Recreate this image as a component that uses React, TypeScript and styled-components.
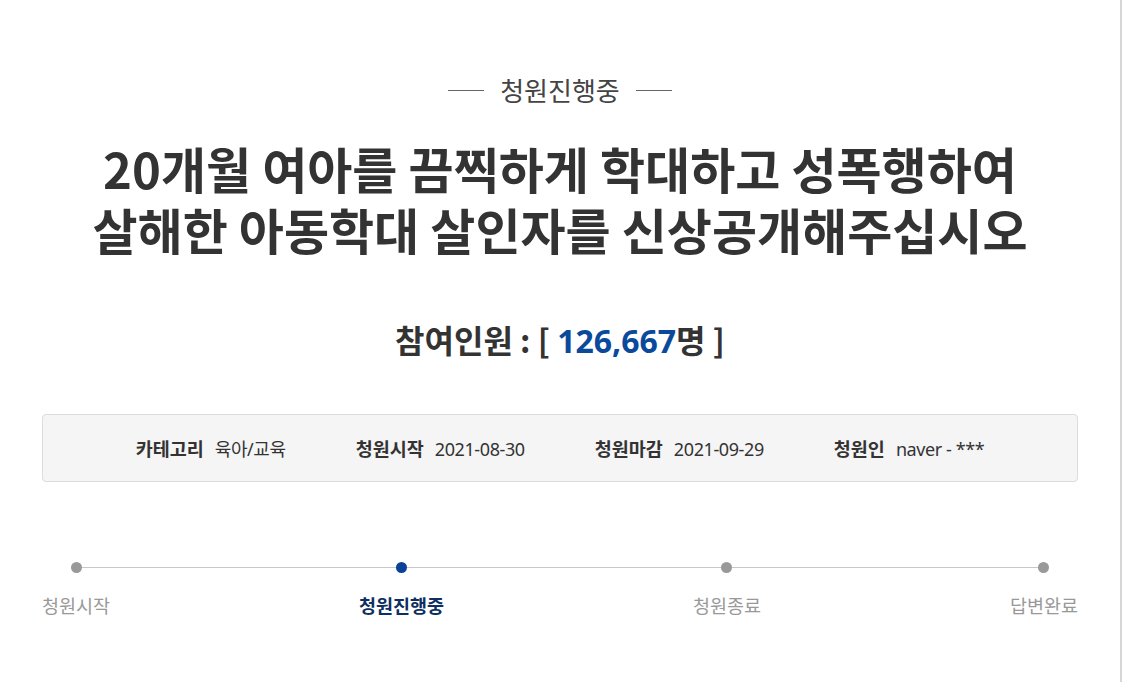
import styled, { createGlobalStyle } from "styled-components";

const GlobalStyle = createGlobalStyle`
  html, body {
    margin: 0;
    padding: 0;
    background: #ffffff;
  }
  body {
    font-family: "Noto Sans", "Noto Sans CJK KR", sans-serif;
    color: #333333;
  }
`;

const steps = [
  { label: "청원시작", active: false },
  { label: "청원진행중", active: true },
  { label: "청원종료", active: false },
  { label: "답변완료", active: false },
];

const info = [
  { label: "카테고리", value: "육아/교육" },
  { label: "청원시작", value: "2021-08-30" },
  { label: "청원마감", value: "2021-09-29" },
  { label: "청원인", value: "naver - ***" },
];

export default function App() {
  return (
    <>
      <GlobalStyle />
      <Page>
        <Content>
          <Status>청원진행중</Status>
          <Title>
            20개월 여아를 끔찍하게 학대하고 성폭행하여
            <br />
            살해한 아동학대 살인자를 신상공개해주십시오
          </Title>
          <Count>
            참여인원 : [ <span>126,667</span>명 ]
          </Count>
          <InfoBox>
            {info.map((item) => (
              <InfoItem key={item.label}>
                <b>{item.label}</b>
                {item.value}
              </InfoItem>
            ))}
          </InfoBox>
          <Progress>
            {steps.map((step) => (
              <Step key={step.label}>
                <Dot active={step.active} />
                <StepLabel active={step.active}>{step.label}</StepLabel>
              </Step>
            ))}
          </Progress>
        </Content>
      </Page>
    </>
  );
}

// Style
const Page = styled.div`
  width: 1122px;
  min-height: 682px;
  border-right: 2px solid #d6d6d6;
  box-sizing: border-box;
  background: #ffffff;
`;

const Content = styled.div`
  width: 1036px;
  margin: 0 auto;
  padding-top: 73px;
  display: flex;
  flex-direction: column;
  align-items: stretch;
`;

const Status = styled.div`
  display: flex;
  align-items: center;
  justify-content: center;
  gap: 16px;
  font-family: "Noto Sans CJK KR", sans-serif;
  font-size: 26px;
  line-height: 34px;
  color: #444444;

  &::before,
  &::after {
    content: "";
    width: 36px;
    height: 1px;
    background: #666666;
  }
`;

const Title = styled.h1`
  margin: 30px 0 0;
  text-align: center;
  font-family: "Noto Sans CJK KR", sans-serif;
  font-size: 49px;
  font-weight: 700;
  line-height: 61px;
  color: #333333;
`;

const Count = styled.div`
  margin-top: 60px;
  text-align: center;
  font-family: "Noto Sans CJK KR", sans-serif;
  font-size: 32px;
  font-weight: 700;
  line-height: 40px;
  color: #333333;

  span {
    color: #0b4a9b;
    font-family: "Noto Sans", "Noto Sans CJK KR", sans-serif;
  }
`;

const InfoBox = styled.div`
  margin-top: 53px;
  height: 68px;
  box-sizing: border-box;
  display: flex;
  align-items: center;
  justify-content: center;
  gap: 70px;
  background: #f5f5f5;
  border: 1px solid #dcdcdc;
  border-radius: 4px;
`;

const InfoItem = styled.div`
  font-family: "Noto Sans", "Noto Sans CJK KR", sans-serif;
  font-size: 18px;
  color: #333333;
  letter-spacing: -0.4px;

  b {
    font-family: "Noto Sans CJK KR", sans-serif;
    font-size: 18.5px;
    font-weight: 700;
    margin-right: 11px;
    letter-spacing: 0;
  }
`;

const Progress = styled.div`
  position: relative;
  margin-top: 80px;
  display: flex;
  justify-content: space-between;

  &::before {
    content: "";
    position: absolute;
    left: 34px;
    right: 34px;
    top: 5px;
    height: 1px;
    background: #c8c8c8;
  }
`;

const Step = styled.div`
  display: flex;
  flex-direction: column;
  align-items: center;
  gap: 20px;
`;

const Dot = styled.span<{ active: boolean }>`
  position: relative;
  width: 11px;
  height: 11px;
  border-radius: 50%;
  background: ${(p) => (p.active ? "#0b4197" : "#999999")};
`;

const StepLabel = styled.span<{ active: boolean }>`
  font-family: "Noto Sans CJK KR", sans-serif;
  font-size: 18.5px;
  line-height: 24px;
  font-weight: ${(p) => (p.active ? 700 : 400)};
  color: ${(p) => (p.active ? "#0d2f61" : "#999999")};
`;
